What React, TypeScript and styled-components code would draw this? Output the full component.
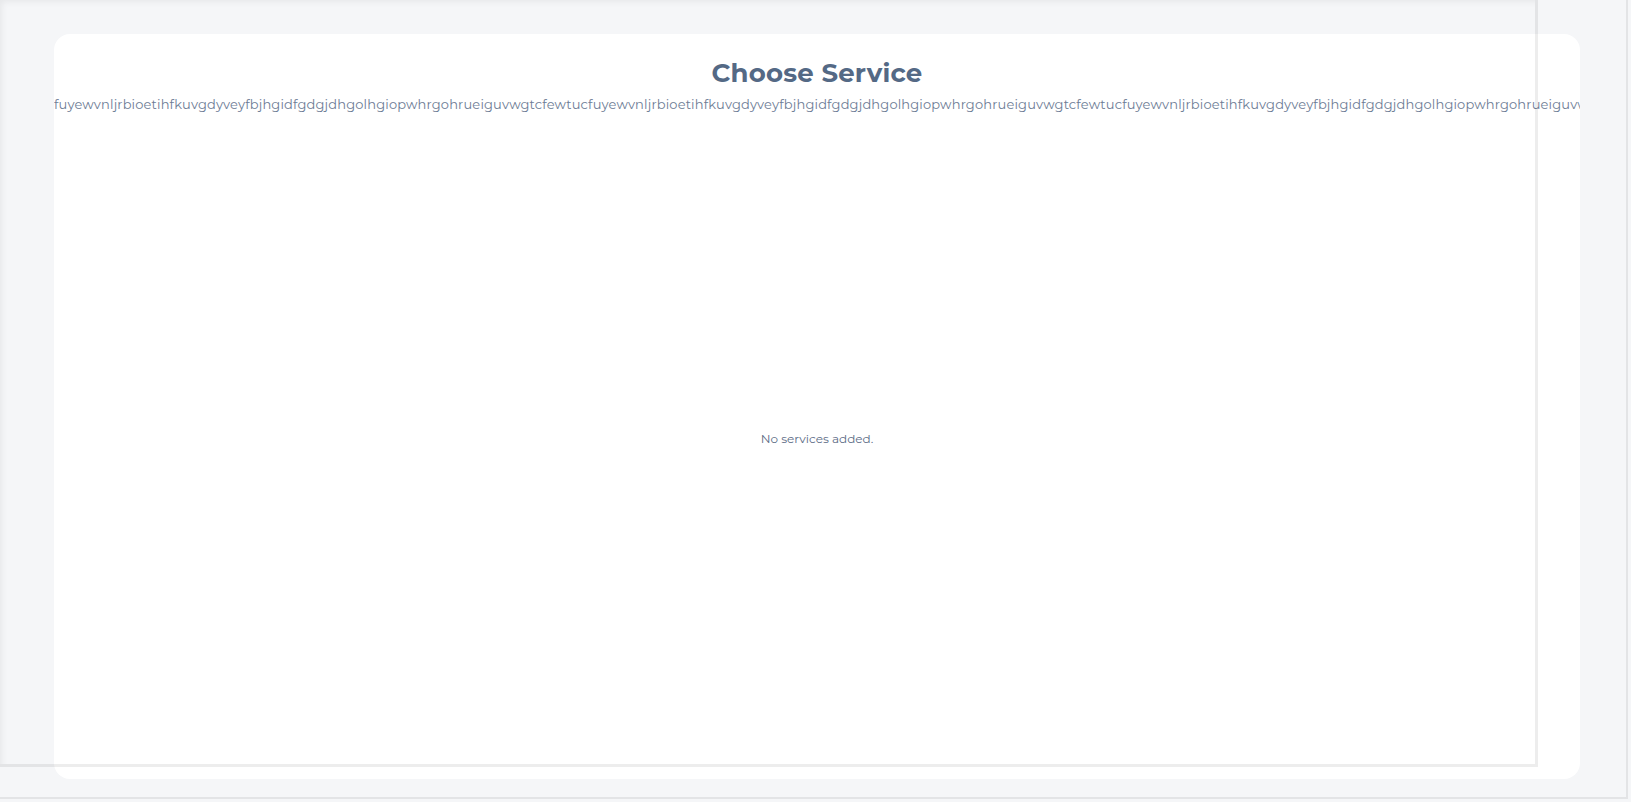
import styled, { createGlobalStyle } from "styled-components";

const Colors = {
  page: "#f5f6f8",
  card: "#ffffff",
  title: "#546985",
  subtitle: "#6d7c95",
  muted: "#5b6b85",
  ghost: "rgba(0, 0, 0, 0.07)",
};

const GlobalStyle = createGlobalStyle`
  html, body {
    margin: 0;
    padding: 0;
    background: ${Colors.page};
  }
  body {
    font-family: "Montserrat", "Inter", "DejaVu Sans", sans-serif;
  }
  * {
    box-sizing: border-box;
  }
`;

const Page = styled.div`
  position: relative;
  width: 100%;
  height: 100vh;
  padding: 34px 51px 23px 54px;
  overflow: hidden;
`;

const Card = styled.div`
  height: 100%;
  background: ${Colors.card};
  border-radius: 16px;
  overflow: hidden;
  display: flex;
  flex-direction: column;
  align-items: stretch;
`;

const Title = styled.h1`
  margin: 23px 0 0;
  font-size: 26px;
  line-height: 32px;
  font-weight: 700;
  letter-spacing: 0.2px;
  text-align: center;
  color: ${Colors.title};
`;

const Subtitle = styled.div`
  margin-top: 6px;
  font-size: 13px;
  line-height: 18px;
  letter-spacing: 0.16px;
  color: ${Colors.subtitle};
  white-space: nowrap;
  text-align: left;
`;

const Empty = styled.div`
  flex: 1;
  display: flex;
  align-items: center;
  justify-content: center;
  padding-bottom: 16px;
  font-size: 12px;
  color: ${Colors.muted};
`;

// faint frame left over from the window behind
const GhostFrame = styled.div<{ w: number; h: number }>`
  position: absolute;
  left: 0;
  top: 0;
  width: ${({ w }) => w}px;
  height: ${({ h }) => h}px;
  pointer-events: none;
  border-right: 3px solid ${Colors.ghost};
  border-bottom: 3px solid ${Colors.ghost};
  box-shadow: inset 5px 5px 6px -3px rgba(0, 0, 0, 0.06);
`;

const GhostEdge = styled.div`
  position: absolute;
  right: 3px;
  top: 0;
  bottom: 3px;
  left: 0;
  pointer-events: none;
  border-right: 2px solid ${Colors.ghost};
  border-bottom: 2px solid ${Colors.ghost};
`;

const word = "fuyewvnljrbioetihfkuvgdyveyfbjhgidfgdgjdhgolhgiopwhrgohrueiguvwgtcfewtuc";

export default function App() {
  return (
    <>
      <GlobalStyle />
      <Page>
        <Card>
          <Title>Choose Service</Title>
          <Subtitle>{word + word + word}</Subtitle>
          <Empty>No services added.</Empty>
        </Card>
        <GhostFrame w={1538} h={767} />
        <GhostEdge />
      </Page>
    </>
  );
}
